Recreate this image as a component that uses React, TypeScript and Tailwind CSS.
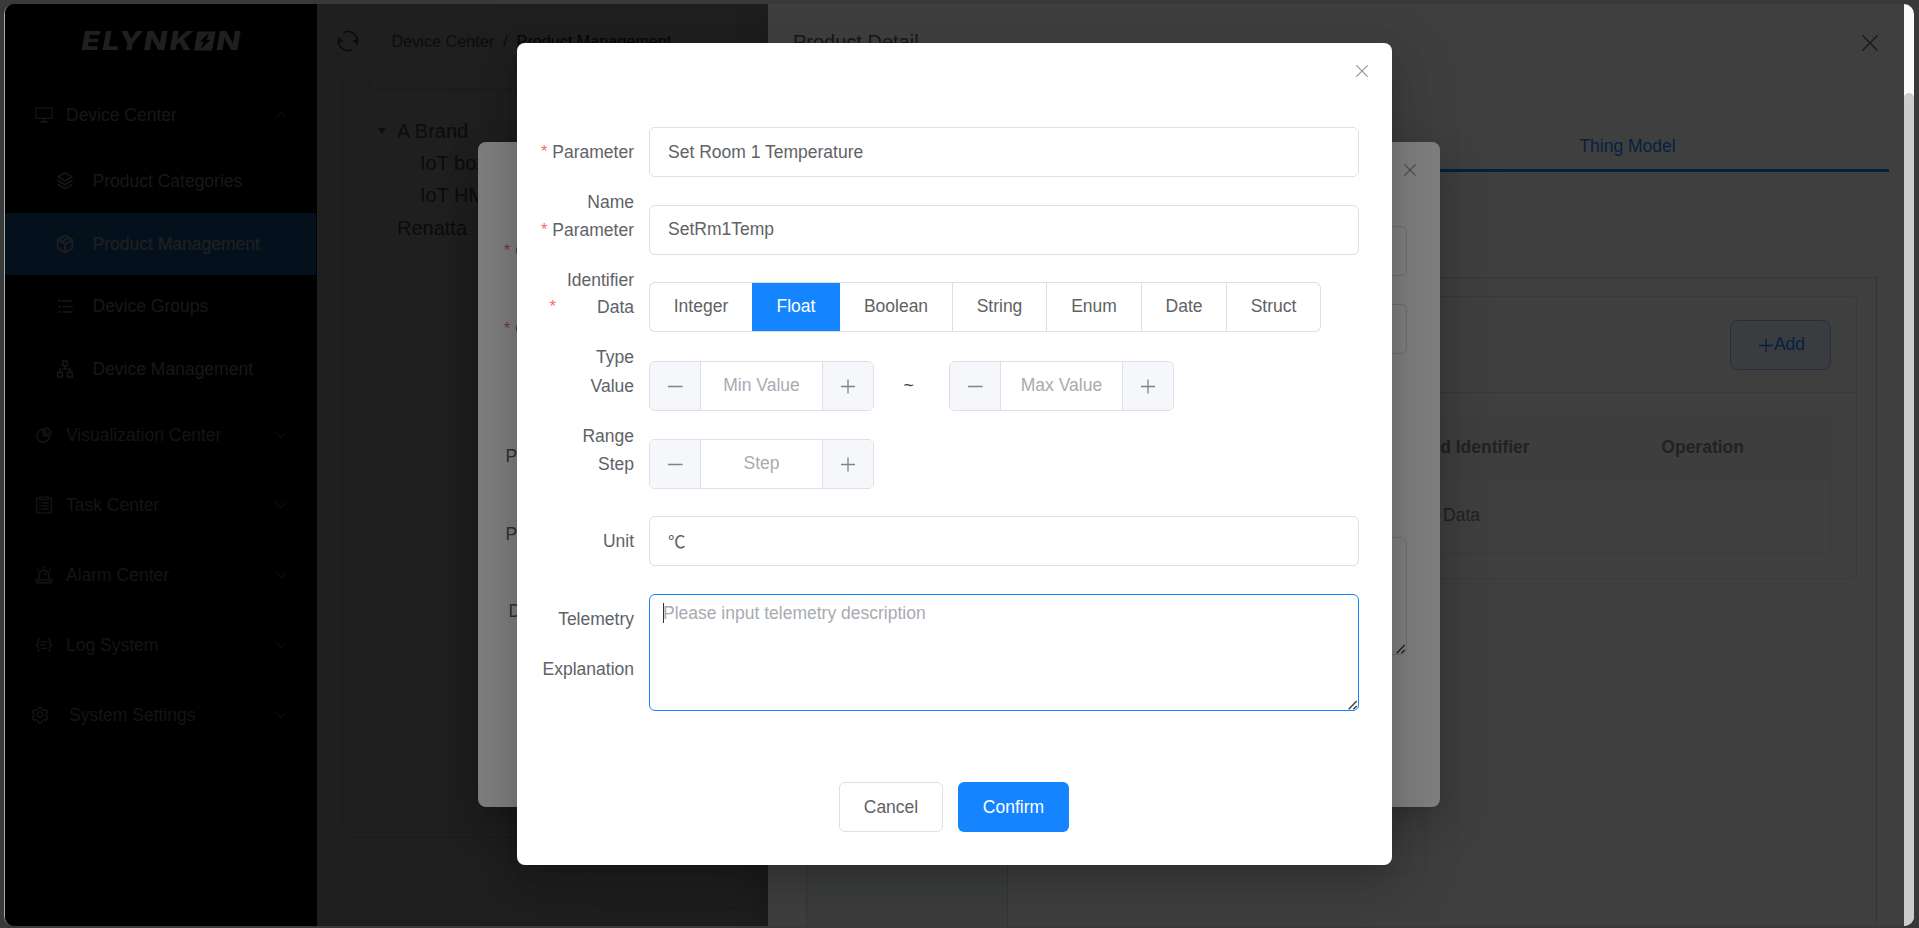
import type { ReactNode } from "react";
import { RiStackLine, RiListUnordered } from "react-icons/ri";
import { AiOutlineApartment, AiOutlineSetting, AiOutlinePieChart } from "react-icons/ai";

const DIALOG_SHADOW =
  "shadow-[0_20px_60px_20px_rgba(0,0,0,0.08),0_15px_40px_rgba(0,0,0,0.12),0_10px_20px_-10px_rgba(0,0,0,0.16)]";

/* ---------- icons ---------- */

function MonitorIcon() {
  return (
    <svg width="18" height="18" viewBox="0 0 18 18" fill="none" stroke="currentColor" strokeWidth="1.2">
      <rect x="1.1" y="2" width="15.8" height="10.4" />
      <path d="M9 12.4v3M4.8 15.8h8.4" strokeWidth="1.5" />
    </svg>
  );
}

function PackageIcon() {
  return (
    <svg width="20" height="20" viewBox="0 0 20 20" fill="none" stroke="currentColor" strokeWidth="1.7" strokeLinejoin="round">
      <path d="M10 1.6l7.3 4.1v8.6L10 18.4l-7.3-4.1V5.7z" />
      <path d="M2.8 5.9L10 10l7.2-4.1M10 10v8.2M5.8 8.2l7.5-4.3" />
    </svg>
  );
}

function ClipboardIcon() {
  return (
    <svg width="18" height="18" viewBox="0 0 18 18" fill="none" stroke="currentColor" strokeWidth="1.3">
      <path d="M5 2.3H1.6v14.6h14.8V2.3H13" />
      <rect x="5" y="1" width="8" height="2.6" />
      <path d="M4.3 7h1.6M4.3 10h1.6M4.3 13h1.6M7.3 7h6.4M7.3 10h6.4M7.3 13h6.4" strokeWidth="1.5" />
    </svg>
  );
}

function AlarmIcon() {
  return (
    <svg width="18" height="18" viewBox="0 0 18 18" fill="none" stroke="currentColor" strokeWidth="1.4">
      <path d="M1.5 14h15v2.8h-15zM4 14V9.3a5 5 0 0 1 10 0V14" />
      <path d="M9 .3v2M2.3 2.8l1.4 1.4M15.7 2.8l-1.4 1.4M9.2 7.2a2 2 0 0 1 2 2" />
    </svg>
  );
}

function LogIcon() {
  return (
    <svg width="18" height="18" viewBox="0 0 18 18" fill="none" stroke="currentColor" strokeWidth="1.3">
      <path d="M4.8 3H3.2v4.3L1.2 9l2 1.7V15h1.6M13.2 3h1.6v4.3l2 1.7-2 1.7V15h-1.6" />
      <path d="M5.8 5.8h6.4M5.8 9h4.2M5.8 12.3h6.4" />
    </svg>
  );
}

function RefreshIcon() {
  return (
    <svg width="22" height="22" viewBox="0 0 22 22" fill="none" stroke="currentColor" strokeWidth="1.7">
      <path d="M6.2 2.9A9.3 9.3 0 0 1 19.6 14.6" />
      <path d="M15.8 19.1A9.3 9.3 0 0 1 2.4 7.4" />
      <path d="M21 9.200l-5.600 1 4 3.800zM1 12.800l5.600-1-4-3.800z" fill="currentColor" stroke="none" />
    </svg>
  );
}

function Chevron({ up = false }: { up?: boolean }) {
  return (
    <svg width="12" height="8" viewBox="0 0 12 8" fill="none" stroke="currentColor" strokeWidth="1">
      <path d={up ? "M.7 6.7L6 1.4l5.3 5.3" : "M.7 1.3L6 6.6l5.3-5.3"} />
    </svg>
  );
}

function Cross({ size, className = "" }: { size: number; className?: string }) {
  return (
    <svg width={size} height={size} viewBox="0 0 12 12" fill="none" stroke="currentColor" className={className}>
      <path d="M.3 .3l11.4 11.4M11.7 .3L.3 11.7" strokeWidth="1.1" />
    </svg>
  );
}

function Plus() {
  return (
    <svg width="16" height="16" viewBox="0 0 16 16" fill="none" stroke="currentColor" strokeWidth="1.3">
      <path d="M1 8.5h14M8 1.5v14" />
    </svg>
  );
}

function Minus() {
  return (
    <svg width="16" height="16" viewBox="0 0 16 16" fill="none" stroke="currentColor" strokeWidth="1.3">
      <path d="M1 8.5h14.6" />
    </svg>
  );
}

function ResizeGrip() {
  return (
    <svg width="10" height="10" viewBox="0 0 10 10" fill="none" stroke="#404040" strokeWidth="1.4" className="absolute right-0 bottom-0">
      <path d="M.7 9.3L8.7 1M5.3 9.3l3.4-3.4" />
    </svg>
  );
}

function Logo() {
  return (
    <svg width="170" height="40" viewBox="0 0 170 40" fill="currentColor" role="img" aria-label="ELYNKON">
      <g transform="translate(5.3 0) skewX(-10)" fontFamily="Inter, sans-serif" fontWeight="800" fontSize="26">
        <text x="1" y="29.5" textLength="113" lengthAdjust="spacingAndGlyphs" letterSpacing="2">ELYNK</text>
        <path fillRule="evenodd" d="M115 10.500h18v19h-18zM127 12l-8.300 8.700h4.200l-1.600 7.600 8.400-9.500h-4.300z" />
        <text x="136" y="29.5" textLength="24" lengthAdjust="spacingAndGlyphs">N</text>
      </g>
    </svg>
  );
}

/* ---------- sidebar ---------- */

function MenuGroup({ icon, label, open = false, offset = false }: { icon: ReactNode; label: string; open?: boolean; offset?: boolean }) {
  return (
    <div className={`flex h-[70px] items-center pr-[30px] ${open ? "text-[#b5b5b5]" : "text-[#a0a0a0]"}`}>
      <span className={offset ? "ml-[25px] mr-[19px]" : "ml-[30px] mr-[13px]"}>{icon}</span>
      <span className="grow">{label}</span>
      <Chevron up={open} />
    </div>
  );
}

function MenuItem({ icon, label, active = false }: { icon: ReactNode; label: string; active?: boolean }) {
  return (
    <div className={`flex h-[62.5px] items-center pl-[50px] ${active ? "mr-px bg-[#208ce8] text-white" : "text-[#b8b8b8]"}`}>
      <span className="flex w-5 justify-center">{icon}</span>
      <span className="ml-[17.5px]">{label}</span>
    </div>
  );
}

function Sidebar() {
  return (
    <aside className="flex w-[312px] shrink-0 flex-col bg-black">
      <div className="flex h-[76px] items-start pl-[74px] pt-[17px] text-white">
        <Logo />
      </div>
      <MenuGroup icon={<MonitorIcon />} label="Device Center" open />
      <MenuItem icon={<RiStackLine size={20} />} label="Product Categories" />
      <MenuItem icon={<PackageIcon />} label="Product Management" active />
      <MenuItem icon={<RiListUnordered size={19} />} label="Device Groups" />
      <MenuItem icon={<AiOutlineApartment size={20} />} label="Device Management" />
      <MenuGroup icon={<AiOutlinePieChart size={18} strokeWidth={24} />} label="Visualization Center" />
      <MenuGroup icon={<ClipboardIcon />} label="Task Center" />
      <MenuGroup icon={<AlarmIcon />} label="Alarm Center" />
      <MenuGroup icon={<LogIcon />} label="Log System" />
      <MenuGroup icon={<AiOutlineSetting size={20} />} label="System Settings" offset />
    </aside>
  );
}

/* ---------- page behind the overlays ---------- */

function ProductPage() {
  return (
    <main className="flex min-w-0 grow flex-col bg-white text-[#606266]">
      <header className="flex h-[74px] shrink-0 items-center pl-5 text-[16.2px] text-[#5c6066]">
        <RefreshIcon />
        <span className="ml-[32.5px]">Device Center</span>
        <span className="mx-[9px]">/</span>
        <span className="text-[#303133]">Product Management</span>
      </header>
      <div className="flex grow items-start gap-3 pt-px pl-[25px]">
        <section className="h-[759px] w-[235px] shrink-0 rounded-b-[10px] border border-t-0 border-[#dcdfe6] pl-[25px]">
          <div className="h-[11px] rounded-bl-[8px] border-b border-l border-[#d0d3da]" />
          <ul className="pt-[24.5px] text-[20px]">
            <li className="flex h-[32.3px] items-center">
              <span className="ml-[10px] mr-[11px] h-0 w-0 border-x-[4.5px] border-t-[6px] border-x-transparent border-t-[#70747a]" />
              A Brand
            </li>
            <li className="flex h-[32.3px] items-center pl-[52px] whitespace-nowrap">IoT box</li>
            <li className="flex h-[32.3px] items-center pl-[52px] whitespace-nowrap">IoT HMI</li>
            <li className="flex h-[32.3px] items-center pl-[29px]">Renatta</li>
          </ul>
        </section>
        <section className="h-[829px] grow rounded-b-[10px] border border-t-0 border-[#dcdfe6]" />
      </div>
    </main>
  );
}

/* ---------- product detail drawer ---------- */

function Drawer() {
  return (
    <div className="absolute inset-0 flex justify-end bg-black/50">
      <section className={`flex w-[1136px] flex-col bg-white text-[#606266] ${DIALOG_SHADOW}`}>
        <header className="flex h-[75px] items-center justify-between pl-[25px] pr-[26px] text-[20px]">
          <h2>Product Detail</h2>
          <Cross size={16} className="mt-[2px]" />
        </header>
        <div className="ml-[25px] mr-[15px] flex h-[93px] border-b-[3px] border-[#1585ff] pt-[42px]">
          <span className="grow" />
          <span className="flex h-[50px] w-[523px] items-center justify-center text-[#1585ff]">Thing Model</span>
        </div>
        <div className="ml-[38px] mr-[27px] mt-[105px] flex grow border border-b-0 border-[#d4d7de]">
          <nav className="w-[201px] border-r border-[#d4d7de] bg-[#f5f7fa]" />
          <div className="grow py-[18px] pl-[18px] pr-[19px]">
            <section className="rounded-[5px] border border-[#e4e7ed]">
              <div className="flex h-[96px] items-center justify-end border-b border-[#e4e7ed] pr-[25px]">
                <button className="flex h-[50px] w-[101px] items-center justify-center rounded-[8px] border border-[#8ac2ff] bg-[#e8f3ff] pl-[2px] text-[#1585ff]">
                  <Plus />
                  Add
                </button>
              </div>
              <div className="flex justify-end px-[25px] py-[25px]">
                <div className="w-[766px] shrink-0 border border-[#ebeef5]">
                  <div className="grid h-[59px] grid-cols-3 divide-x divide-[#ebeef5] border-b border-[#ebeef5] bg-[#fafafa] text-center leading-[57px] font-bold text-[#858890]">
                    <span>Command Name</span>
                    <span>Command Identifier</span>
                    <span>Operation</span>
                  </div>
                  <p className="h-[74px] text-center leading-[74px] text-[#858890]">No Data</p>
                </div>
              </div>
            </section>
          </div>
        </div>
      </section>
    </div>
  );
}

/* ---------- dialogs ---------- */

const FIELD = "flex h-[50px] items-center rounded-[6px] border border-[#dcdfe6] pl-[18px]";

function Row({ label, star, className = "", children }: { label: ReactNode; star?: string; className?: string; children?: ReactNode }) {
  return (
    <div className={`flex items-start ${className}`}>
      <div className="h-[50px] w-[125px] shrink-0 pr-[15px] text-right leading-[50px] whitespace-nowrap">
        {star && <span className={`align-[1px] text-[16.5px] leading-none text-[#f56c6c] ${star}`}>*</span>}
        {label}
      </div>
      <div className="min-w-0 grow">{children}</div>
    </div>
  );
}

function CommandDialog() {
  return (
    <div className="absolute inset-0 bg-black/50 pt-[138px] pl-[473px]">
      <section className={`flex h-[665px] w-[962px] flex-col rounded-[8px] bg-white pr-[33px] pl-[8px] text-[#606266] ${DIALOG_SHADOW}`}>
        <header className="flex h-[84px] items-start justify-end pt-[22px] text-[#909399]">
          <Cross size={12} className="-mr-[9px]" />
        </header>
        <Row label="Command" star="mr-[5px]"><div className={FIELD} /></Row>
        <Row label="Command" star="mr-[5px]" className="mt-7"><div className={FIELD} /></Row>
        <Row label="Parameters" className="mt-[77px]" />
        <Row label={<span className="block pt-[12px] leading-[26px]">Parameters<br />Collection</span>} className="mt-[28px]" />
        <Row label="Description" className="mt-[27px]" />
        <div className="relative -mt-[99px] ml-[125px] h-[118px] rounded-[6px] border border-[#dcdfe6]">
          <ResizeGrip />
        </div>
      </section>
    </div>
  );
}

function NumberInput({ placeholder }: { placeholder: string }) {
  return (
    <div className="flex h-[50px] w-[225px] overflow-hidden rounded-[6px] border border-[#dcdfe6] text-[#808389]">
      <span className="flex w-[51px] items-center justify-center border-r border-[#dcdfe6] bg-[#f5f7fa]"><Minus /></span>
      <span className="flex grow items-center justify-center pb-px text-[#a8abb2]">{placeholder}</span>
      <span className="flex w-[51px] items-center justify-center border-l border-[#dcdfe6] bg-[#f5f7fa]"><Plus /></span>
    </div>
  );
}

const TYPES = [
  { name: "Integer", cls: "w-[103px] rounded-l-[6px] border-l" },
  { name: "Float", cls: "w-[88px] bg-[#1585ff] border-[#1585ff] text-white" },
  { name: "Boolean", cls: "w-[113px] border-r" },
  { name: "String", cls: "w-[94px] border-r" },
  { name: "Enum", cls: "w-[95px] border-r" },
  { name: "Date", cls: "w-[85px] border-r" },
  { name: "Struct", cls: "w-[94px] rounded-r-[6px] border-r" },
];

function ParameterDialog() {
  return (
    <div className="absolute inset-0 bg-black/50 pt-[39px] pl-[512px]">
      <section className={`flex h-[822px] w-[875px] flex-col rounded-[8px] bg-white pr-[33px] pl-[7px] text-[#606266] ${DIALOG_SHADOW}`}>
        <header className="flex h-[84px] items-start justify-end pt-[22px] text-[#909399]">
          <Cross size={12} className="-mr-[9px]" />
        </header>
        <Row label={<>Parameter<br />Name</>} star="mr-[5px]">
          <div className={FIELD}>Set Room 1 Temperature</div>
        </Row>
        <Row label={<>Parameter<br />Identifier</>} star="mr-[5px]" className="mt-7">
          <div className={`${FIELD} pb-px`}>SetRm1Temp</div>
        </Row>
        <Row label={<>Data<br />Type</>} star="mr-[41px]" className="mt-[27px]">
          <div className="flex">
            {TYPES.map((t) => (
              <span key={t.name} className={`flex h-[50px] items-center justify-center border-y border-[#dcdfe6] pb-[2px] ${t.cls}`}>{t.name}</span>
            ))}
          </div>
        </Row>
        <Row label={<>Value<br />Range</>} className="mt-[29px]">
          <div className="flex items-center">
            <NumberInput placeholder="Min Value" />
            <span className="w-[75px] pr-[6px] pb-[2px] text-center text-[#404246]">~</span>
            <NumberInput placeholder="Max Value" />
          </div>
        </Row>
        <Row label="Step" className="mt-7">
          <NumberInput placeholder="Step" />
        </Row>
        <Row label="Unit" className="mt-[27px]">
          <div className={`${FIELD} font-['Noto_Sans_CJK_SC','Noto_Sans',sans-serif]`}>℃</div>
        </Row>
        <Row label={<>Telemetry<br />Explanation</>} className="mt-7">
          <div className="relative flex h-[117px] items-start rounded-[6px] border border-[#1585ff] pt-2 pl-[13px]">
            <span className="-mr-px h-5 w-px bg-[#303133]" />
            <span className="leading-5 text-[#a8abb2]">Please input telemetry description</span>
            <ResizeGrip />
          </div>
        </Row>
        <footer className="mt-[71px] flex justify-center gap-[15px] pl-[25px]">
          <button className="h-[50px] w-[104px] rounded-[6px] border border-[#dcdfe6]">Cancel</button>
          <button className="h-[50px] w-[111px] rounded-[6px] bg-[#1585ff] text-white">Confirm</button>
        </footer>
      </section>
    </div>
  );
}

export default function App() {
  return (
    <div className="flex h-[928px] w-[1919px] overflow-hidden bg-[#393939] pt-1 pr-[5px] pb-[2px] pl-1 font-['Liberation_Sans',Arial,sans-serif] text-[17.5px] leading-normal">
      <div className="flex grow overflow-hidden rounded-[10px] border-l border-[#aaaaaa]">
        <div className="relative flex w-[1899px] shrink-0 overflow-hidden">
          <Sidebar />
          <ProductPage />
          <Drawer />
          <CommandDialog />
          <ParameterDialog />
        </div>
        <div className="flex grow flex-col bg-[#fafafa] pt-[89px]">
          <div className="grow rounded-t-[5px] bg-[#cdcdcd]" />
        </div>
      </div>
    </div>
  );
}
